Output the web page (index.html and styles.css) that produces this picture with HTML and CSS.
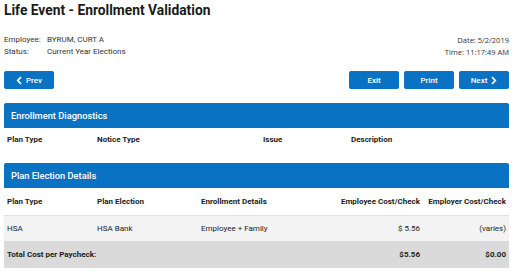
FILE: index.html
```html
<!DOCTYPE html>
<html lang="en">
<head>
  <meta charset="UTF-8">
  <title>Life Event - Enrollment Validation</title>
  <link rel="stylesheet" href="styles.css">
</head>
<body>

  <div class="page">
    <h1>Life Event - Enrollment Validation</h1>

    <div class="info">
      <div class="info-left">
        <div class="info-row"><span class="info-label">Employee:</span><span>BYRUM, CURT A</span></div>
        <div class="info-row"><span class="info-label">Status:</span><span>Current Year Elections</span></div>
      </div>
      <div class="info-right">
        <div>Date: 5/2/2019</div>
        <div>Time: 11:17:49 AM</div>
      </div>
    </div>

    <div class="toolbar">
      <button class="btn">
        <svg width="6" height="9" viewBox="0 0 6 9"><path d="M5 1 L1.8 4.5 L5 8" fill="none" stroke="#fff" stroke-width="1.8"/></svg>
        Prev
      </button>
      <div class="toolbar-right">
        <button class="btn">Exit</button>
        <button class="btn">Print</button>
        <button class="btn">
          Next
          <svg width="6" height="9" viewBox="0 0 6 9"><path d="M1 1 L4.2 4.5 L1 8" fill="none" stroke="#fff" stroke-width="1.8"/></svg>
        </button>
      </div>
    </div>

    <div class="panel">
      <div class="panel-title">Enrollment Diagnostics</div>
      <table class="diag">
        <tr class="head">
          <th class="c-plan">Plan Type</th>
          <th class="c-notice">Notice Type</th>
          <th class="c-issue">Issue</th>
          <th>Description</th>
        </tr>
      </table>
    </div>

    <div class="panel">
      <div class="panel-title">Plan Election Details</div>
      <table class="elect">
        <tr class="head">
          <th class="c-plan">Plan Type</th>
          <th class="c-election">Plan Election</th>
          <th class="c-details">Enrollment Details</th>
          <th class="num">Employee Cost/Check</th>
          <th class="num c-employer">Employer Cost/Check</th>
        </tr>
        <tr class="row">
          <td>HSA</td>
          <td>HSA Bank</td>
          <td>Employee + Family</td>
          <td class="num">$ 5.56</td>
          <td class="num">(varies)</td>
        </tr>
        <tr class="total">
          <td colspan="3">Total Cost per Paycheck:</td>
          <td class="num">$5.56</td>
          <td class="num">$0.00</td>
        </tr>
      </table>
    </div>
  </div>

</body>
</html>
```

FILE: styles.css
```css
body {
  margin: 0;
  background: #fff;
  font-family: Roboto, "Liberation Sans", sans-serif;
  color: #222;
}

.page {
  width: 505px;
  margin-left: 4px;
}

h1 {
  margin: 0;
  font-size: 13.8px;
  line-height: 20px;
  font-weight: 700;
  color: #1a1a1a;
}

.info {
  display: flex;
  justify-content: space-between;
  margin-top: 14px;
  font-size: 8px;
  line-height: 12px;
  color: #333;
}

.info-label {
  display: inline-block;
  width: 43px;
}

.info-right {
  text-align: right;
  font-family: "Open Sans", sans-serif;
  font-size: 7.5px;
}

.toolbar {
  display: flex;
  justify-content: space-between;
  margin-top: 13px;
}

.toolbar-right {
  display: flex;
  gap: 5px;
}

.btn {
  display: flex;
  align-items: center;
  justify-content: center;
  gap: 4px;
  width: 50px;
  height: 18px;
  padding: 0;
  border: none;
  border-radius: 2px;
  background: #0a72c2;
  color: #fff;
  font-family: Roboto, sans-serif;
  font-size: 8px;
  font-weight: 500;
}

.panel {
  margin-top: 14px;
}

.panel + .panel {
  margin-top: 12px;
}

.panel-title {
  height: 25px;
  line-height: 25px;
  padding-left: 7px;
  background: #0a72c2;
  color: #fff;
  font-size: 9.3px;
  font-weight: 500;
  border-radius: 2px 2px 0 0;
}

table {
  width: 100%;
  border-collapse: collapse;
  font-size: 8px;
}

th {
  text-align: left;
  font-weight: 700;
}

th, td {
  padding: 0 3px;
}

.diag .head {
  height: 23px;
}

.diag .c-plan { width: 84px; }
.diag .c-notice { width: 160px; }
.diag .c-issue { width: 82px; }

.elect .c-plan { width: 84px; }
.elect .c-election { width: 98px; }
.elect .c-details { width: 120px; }
.elect .c-employer { width: 80px; }

.elect .head {
  height: 27px;
  border-bottom: 1px solid #e2e2e2;
}

.elect .row {
  height: 26px;
  background: #f3f3f3;
}

.elect .total {
  height: 27px;
  background: #dadada;
  font-weight: 700;
}

.num {
  text-align: right;
}
```
